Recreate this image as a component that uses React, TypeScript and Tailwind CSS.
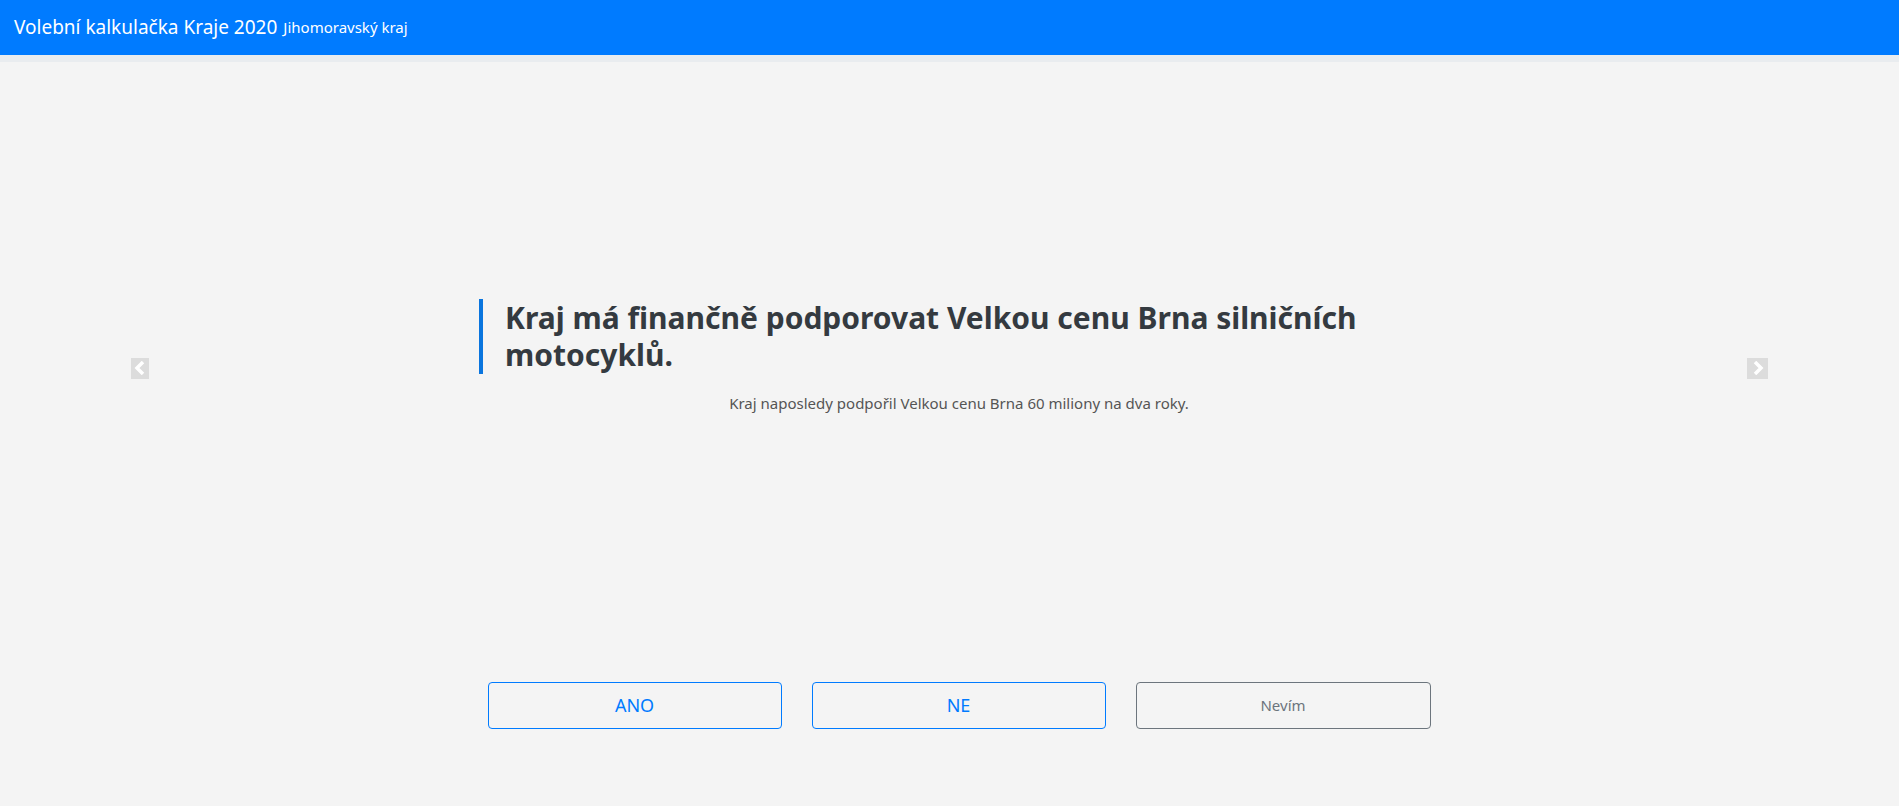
import React from "react";

export default function App() {
  const font = { fontFamily: '"Noto Sans", "Open Sans", sans-serif' };
  return (
    <div className="min-h-[806px] w-full bg-[#f4f4f4] flex flex-col" style={font}>
      <header className="h-[55px] bg-[#007bff] flex items-center pl-[14px] text-white">
        <span className="text-[19px] leading-none">Volební kalkulačka Kraje 2020</span>
        <span className="text-[15px] leading-none ml-[6px]">Jihomoravský kraj</span>
      </header>
      <div className="h-[7px] bg-[#e9ecef]" />
      <div className="flex-1 flex">
        <div className="w-[131px]" />
        <div className="flex-1 flex flex-col">
          <div className="flex items-center h-[612px]">
            <div className="w-[18px] h-[21px] bg-[#dcdcdc] flex items-center justify-center">
              <svg width="12" height="14" viewBox="0 0 12 14"><path d="M9 1 L3 7 L9 13" stroke="#fff" strokeWidth="3.5" fill="none" /></svg>
            </div>
            <div className="flex-1 flex justify-center">
              <div className="w-[960px] ml-[22px] mb-[24px]">
                <h1 className="border-l-4 border-[#0a75de] pl-[22px] text-[30px] font-bold leading-[1.25] text-[#343a40]">
                  Kraj má finančně podporovat Velkou cenu Brna silničních motocyklů.
                </h1>
                <p className="text-center text-[15px] leading-[22px] text-[#555] mt-[18px]">
                  Kraj naposledy podpořil Velkou cenu Brna 60 miliony na dva roky.
                </p>
              </div>
            </div>
            <div className="w-[21px] h-[21px] bg-[#dcdcdc] flex items-center justify-center">
              <svg width="12" height="14" viewBox="0 0 12 14"><path d="M3 1 L9 7 L3 13" stroke="#fff" strokeWidth="3.5" fill="none" /></svg>
            </div>
          </div>
        </div>
        <div className="w-[131px]" />
      </div>
      <div className="flex justify-center gap-[30px] pl-[19px] pb-[77px]">
        <button className="w-[294px] h-[47px] border border-[#007bff] rounded-[4px] text-[#007bff] text-[18px]">ANO</button>
        <button className="w-[294px] h-[47px] border border-[#007bff] rounded-[4px] text-[#007bff] text-[18px]">NE</button>
        <button className="w-[295px] h-[47px] border border-[#6c757d] rounded-[4px] text-[#6c757d] text-[15px]">Nevím</button>
      </div>
    </div>
  );
}
